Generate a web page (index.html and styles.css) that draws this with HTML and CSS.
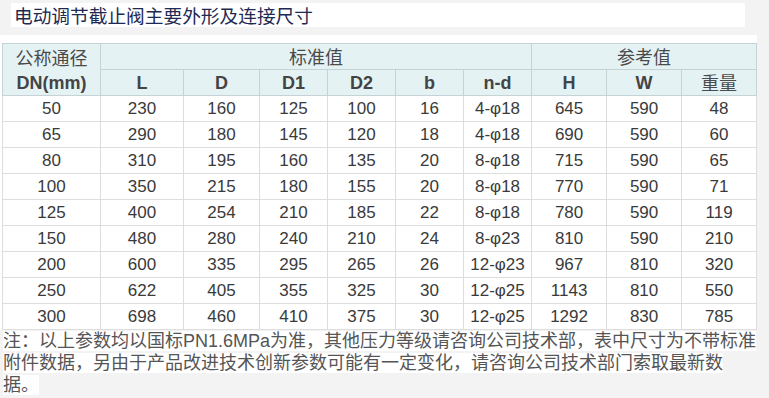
FILE: index.html
```html
<!DOCTYPE html>
<html lang="zh-CN">
<head>
<meta charset="utf-8">
<title>电动调节截止阀主要外形及连接尺寸</title>
<link rel="stylesheet" href="styles.css">
</head>
<body>
<div class="page">
  <h1 class="title">电动调节截止阀主要外形及连接尺寸</h1>
  <div class="table-wrap">
    <table class="spec">
      <colgroup>
        <col class="c98"><col class="c83"><col class="c76"><col class="c68"><col class="c68"><col class="c68"><col class="c68"><col class="c75"><col class="c75"><col class="c75">
      </colgroup>
      <thead>
        <tr>
          <th rowspan="2" class="dn"><span class="cjk">公称通径</span><br>DN(mm)</th>
          <th colspan="6"><span class="cjk">标准值</span></th>
          <th colspan="3"><span class="cjk">参考值</span></th>
        </tr>
        <tr>
          <th>L</th><th>D</th><th>D1</th><th>D2</th><th>b</th><th>n-d</th><th>H</th><th>W</th><th><span class="cjk">重量</span></th>
        </tr>
      </thead>
      <tbody>
        <tr><td>50</td><td>230</td><td>160</td><td>125</td><td>100</td><td>16</td><td>4-φ18</td><td>645</td><td>590</td><td>48</td></tr>
        <tr><td>65</td><td>290</td><td>180</td><td>145</td><td>120</td><td>18</td><td>4-φ18</td><td>690</td><td>590</td><td>60</td></tr>
        <tr><td>80</td><td>310</td><td>195</td><td>160</td><td>135</td><td>20</td><td>8-φ18</td><td>715</td><td>590</td><td>65</td></tr>
        <tr><td>100</td><td>350</td><td>215</td><td>180</td><td>155</td><td>20</td><td>8-φ18</td><td>770</td><td>590</td><td>71</td></tr>
        <tr><td>125</td><td>400</td><td>254</td><td>210</td><td>185</td><td>22</td><td>8-φ18</td><td>780</td><td>590</td><td>119</td></tr>
        <tr><td>150</td><td>480</td><td>280</td><td>240</td><td>210</td><td>24</td><td>8-φ23</td><td>810</td><td>590</td><td>210</td></tr>
        <tr><td>200</td><td>600</td><td>335</td><td>295</td><td>265</td><td>26</td><td>12-φ23</td><td>967</td><td>810</td><td>320</td></tr>
        <tr><td>250</td><td>622</td><td>405</td><td>355</td><td>325</td><td>30</td><td>12-φ25</td><td>1143</td><td>810</td><td>550</td></tr>
        <tr><td>300</td><td>698</td><td>460</td><td>410</td><td>375</td><td>30</td><td>12-φ25</td><td>1292</td><td>830</td><td>785</td></tr>
      </tbody>
    </table>
  </div>
  <p class="note"><span class="note-text">注：以上参数均以国标PN1.6MPa为准，其他压力等级请咨询公司技术部，表中尺寸为不带标准<br>附件数据，另由于产品改进技术创新参数可能有一定变化，请咨询公司技术部门索取最新数<br>据。</span></p>
</div>
</body>
</html>
```
FILE: styles.css
```css
html, body {
  margin: 0;
  padding: 0;
  background: #f3f3f3;
}
body {
  font-family: "Liberation Sans", Arial, "Noto Sans CJK SC", sans-serif;
  color: #333;
}
.page {
  width: 769px;
  padding-top: 3px;
}
.title {
  margin: 0 0 0 11px;
  width: 731px;
  height: 24px;
  padding-left: 3px;
  background: #fff;
  font-size: 18.7px;
  font-weight: normal;
  line-height: 24px;
  color: #1e2a52;
  font-family: "Noto Sans CJK SC", sans-serif;
  white-space: nowrap;
}
.table-wrap {
  margin-top: 8px;
  padding-top: 8px;
  background: #fff;
  width: 757px;
}
.spec {
  border-collapse: collapse;
  table-layout: fixed;
  width: 755px;
  margin-left: 2px;
  font-size: 17px;
}
.c98 { width: 98px; }
.c83 { width: 83px; }
.c76 { width: 76px; }
.c68 { width: 68px; }
.c75 { width: 75px; }
.spec th, .spec td {
  border: 1px solid #cfd9dc;
  text-align: center;
  padding: 0;
  height: 25px;
  line-height: 20px;
}
.spec th {
  background: #e5f2f4;
  color: #444;
  font-size: 18px;
  font-weight: bold;
  border-color: #c5d3d6;
}
.spec th.dn {
  line-height: 24px;
}
.cjk {
  font-family: "Noto Sans CJK SC", sans-serif;
  font-weight: normal;
  color: #4a4a4a;
}
.spec td {
  background: #fff;
  color: #3a3a3a;
  border-color: #dedede;
}
.note {
  margin: 0;
  padding: 0 0 0 3px;
  width: 766px;
  font-size: 18px;
  line-height: 22px;
  color: #555;
  white-space: nowrap;
  font-family: "Liberation Sans", Arial, "Noto Sans CJK SC", sans-serif;
}
.note-text {
  background: #fff;
}
```
